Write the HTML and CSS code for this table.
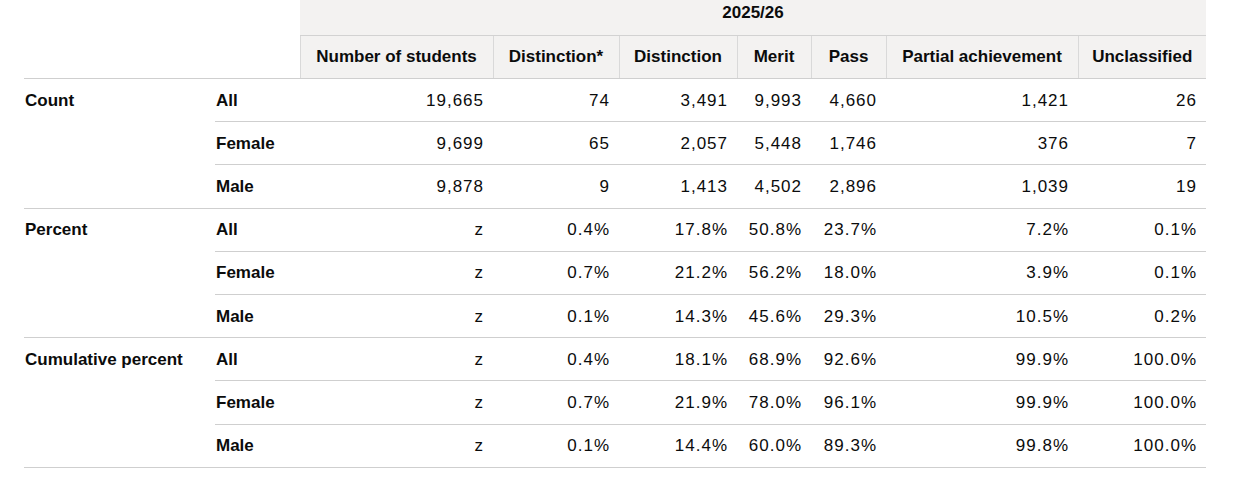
FILE: index.html
```html
<!DOCTYPE html>
<html lang="en">
<head>
<meta charset="utf-8">
<title>2025/26 results</title>
<link rel="stylesheet" href="styles.css">
</head>
<body>
<div class="page">
<table class="data">
  <colgroup>
    <col class="c-group"><col class="c-sub"><col class="c-n"><col class="c-ds"><col class="c-d"><col class="c-m"><col class="c-p"><col class="c-pa"><col class="c-u">
  </colgroup>
  <thead>
    <tr class="h1">
      <td class="blank" colspan="2"></td>
      <th class="year" colspan="7">2025/26</th>
    </tr>
    <tr class="h2">
      <td class="blank" colspan="2"></td>
      <th>Number of students</th>
      <th>Distinction*</th>
      <th>Distinction</th>
      <th>Merit</th>
      <th>Pass</th>
      <th>Partial achievement</th>
      <th>Unclassified</th>
    </tr>
  </thead>
  <tbody>
    <tr><th class="grp" rowspan="3">Count</th><th class="sub">All</th><td>19,665</td><td>74</td><td>3,491</td><td>9,993</td><td>4,660</td><td>1,421</td><td>26</td></tr>
    <tr><th class="sub">Female</th><td>9,699</td><td>65</td><td>2,057</td><td>5,448</td><td>1,746</td><td>376</td><td>7</td></tr>
    <tr class="end"><th class="sub">Male</th><td>9,878</td><td>9</td><td>1,413</td><td>4,502</td><td>2,896</td><td>1,039</td><td>19</td></tr>

    <tr><th class="grp" rowspan="3">Percent</th><th class="sub">All</th><td>z</td><td>0.4%</td><td>17.8%</td><td>50.8%</td><td>23.7%</td><td>7.2%</td><td>0.1%</td></tr>
    <tr><th class="sub">Female</th><td>z</td><td>0.7%</td><td>21.2%</td><td>56.2%</td><td>18.0%</td><td>3.9%</td><td>0.1%</td></tr>
    <tr class="end"><th class="sub">Male</th><td>z</td><td>0.1%</td><td>14.3%</td><td>45.6%</td><td>29.3%</td><td>10.5%</td><td>0.2%</td></tr>

    <tr><th class="grp" rowspan="3">Cumulative percent</th><th class="sub">All</th><td>z</td><td>0.4%</td><td>18.1%</td><td>68.9%</td><td>92.6%</td><td>99.9%</td><td>100.0%</td></tr>
    <tr><th class="sub">Female</th><td>z</td><td>0.7%</td><td>21.9%</td><td>78.0%</td><td>96.1%</td><td>99.9%</td><td>100.0%</td></tr>
    <tr class="end"><th class="sub">Male</th><td>z</td><td>0.1%</td><td>14.4%</td><td>60.0%</td><td>89.3%</td><td>99.8%</td><td>100.0%</td></tr>
  </tbody>
</table>
</div>
</body>
</html>
```

FILE: styles.css
```css
html, body {
  margin: 0;
  padding: 0;
  background: #ffffff;
}

.page {
  padding: 0 0 0 24px;
}

.data {
  width: 1182px;
  border-collapse: collapse;
  table-layout: fixed;
  font-family: "Liberation Sans", Arial, sans-serif;
  font-size: 17px;
  line-height: 22px;
  color: #0b0c0c;
}

.c-group { width: 191px; }
.c-sub { width: 85px; }
.c-n { width: 193px; }
.c-ds { width: 126px; }
.c-d { width: 118px; }
.c-m { width: 74px; }
.c-p { width: 75px; }
.c-pa { width: 192px; }
.c-u { width: 128px; }

.data th,
.data td {
  padding: 10px 9px 10px 0;
  border-bottom: 1px solid #cfcfcf;
  vertical-align: top;
  white-space: nowrap;
}

.data thead th {
  background: #f3f2f1;
  text-align: center;
  font-weight: 700;
  padding: 10px 8px;
  border-left: 1px solid #d9d9d9;
  border-right: 1px solid #d9d9d9;
  border-bottom: 1px solid #d2d2d2;
}

.data thead tr.h1 th.year {
  padding: 2px 8px 11px;
  border-left: 0;
  border-right: 0;
}

.data thead th:last-child {
  border-right: 0;
}

.data thead tr.h1 td.blank {
  border-bottom: 0;
  padding: 0;
}

.data thead tr.h2 td.blank {
  padding: 0;
  border-bottom: 1px solid #cfcfcf;
}

.data thead tr.h2 th {
  border-bottom: 1px solid #cfcfcf;
}

.data tbody th,
.data tbody td {
  padding-top: 10.6px;
  padding-bottom: 9.6px;
}

.data tbody th {
  text-align: left;
  font-weight: 700;
}

.data tbody th.grp,
.data tbody th.sub {
  padding-left: 1px;
}

.data tbody td {
  text-align: right;
  letter-spacing: 1px;
  padding-right: 9px;
}
```
